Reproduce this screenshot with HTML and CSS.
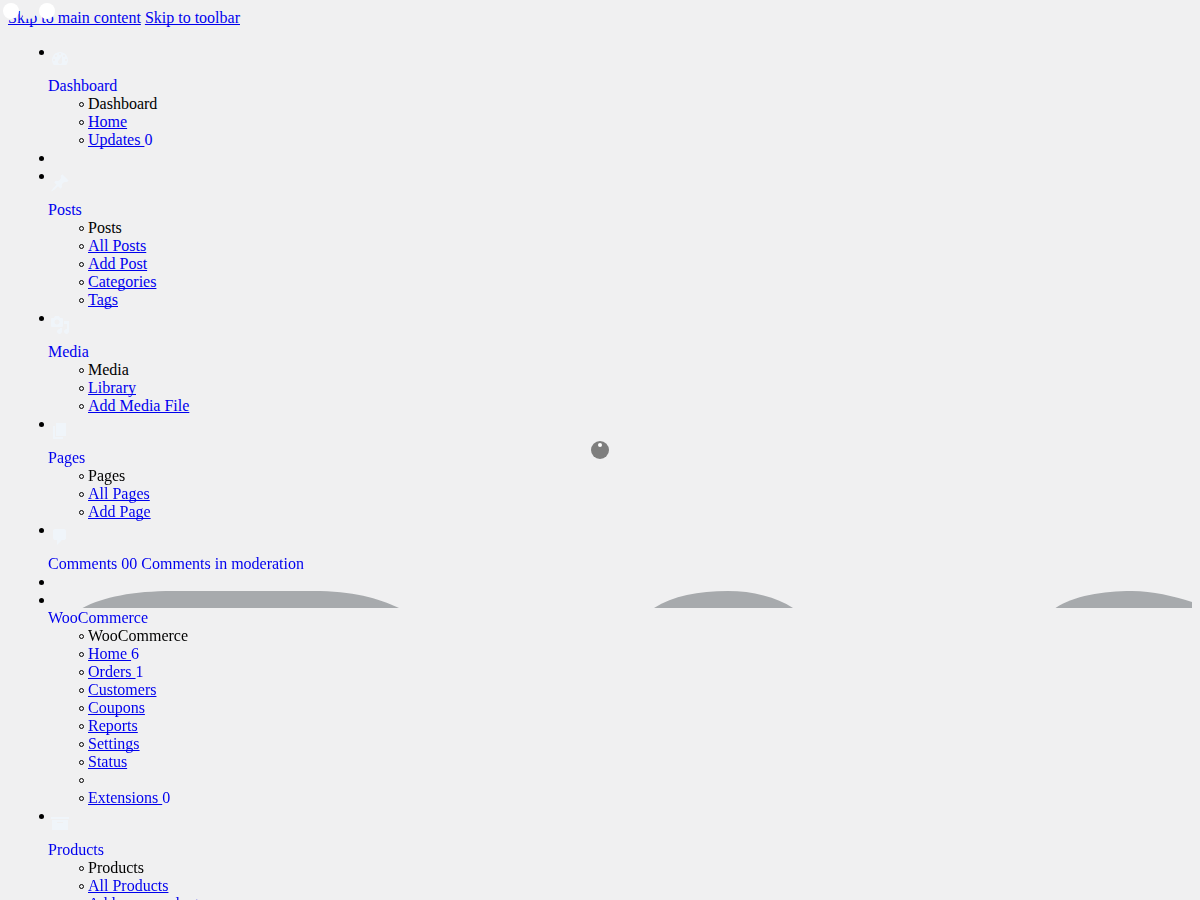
FILE: index.html
```html
<!DOCTYPE html>
<html lang="en">

<head>
    <meta charset="UTF-8">
    <meta name="viewport" content="width=device-width, initial-scale=1.0">
    <title>Dashboard</title>
    <link rel="stylesheet" href="styles.css">
</head>

<body>
    <div class="window-dots">
        <span class="dot dot-white"></span>
        <span class="dot dot-blank"></span>
        <span class="dot dot-white"></span>
    </div>
    <div class="spinner"><span class="spinner-dot"></span></div>

    <a href="#">Skip to main content</a>
    <a href="#">Skip to toolbar</a>

    <ul class="admin-menu">
        <li>
            <a class="menu-link" href="#">
                <div class="menu-image">
                    <svg class="menu-icon" viewBox="0 0 20 20"><path d="M3.76 16h12.48c1.1-1.37 1.76-3.11 1.76-5 0-4.42-3.58-8-8-8s-8 3.58-8 8c0 1.89.66 3.63 1.76 5zM10 4c.55 0 1 .45 1 1s-.45 1-1 1-1-.45-1-1 .45-1 1-1zM6 6c.55 0 1 .45 1 1s-.45 1-1 1-1-.45-1-1 .45-1 1-1zm8 0c.55 0 1 .45 1 1s-.45 1-1 1-1-.45-1-1 .45-1 1-1zm-5.37 5.55L12 7v6c0 1.1-.9 2-2 2s-2-.9-2-2c0-.57.24-1.08.63-1.45zM4 10c.55 0 1 .45 1 1s-.45 1-1 1-1-.45-1-1 .45-1 1-1zm12 0c.55 0 1 .45 1 1s-.45 1-1 1-1-.45-1-1 .45-1 1-1z" fill-rule="evenodd"/></svg>
                </div>
                <div>Dashboard</div>
            </a>
            <ul>
                <li>Dashboard</li>
                <li><a href="#">Home</a></li>
                <li><a href="#">Updates <span class="count">0</span></a></li>
            </ul>
        </li>
        <li></li>
        <li>
            <a class="menu-link" href="#">
                <div class="menu-image">
                    <svg class="menu-icon" viewBox="0 0 20 20"><path d="M10.44 3.02l1.82-1.82 6.36 6.35-1.83 1.82c-1.05-.68-2.48-.57-3.41.36l-.75.75c-.92.93-1.04 2.35-.35 3.41l-1.83 1.82-2.41-2.41-2.8 2.79c-.42.42-3.38 2.71-3.8 2.29s1.86-3.39 2.28-3.81l2.79-2.79L4.1 9.36l1.83-1.82c1.05.69 2.48.57 3.4-.36l.75-.75c.93-.92 1.05-2.35.36-3.41z"/></svg>
                </div>
                <div>Posts</div>
            </a>
            <ul>
                <li>Posts</li>
                <li><a href="#">All Posts</a></li>
                <li><a href="#">Add Post</a></li>
                <li><a href="#">Categories</a></li>
                <li><a href="#">Tags</a></li>
            </ul>
        </li>
        <li>
            <a class="menu-link" href="#">
                <div class="menu-image">
                    <svg class="menu-icon" viewBox="0 0 20 20"><path d="M13 11V4c0-.55-.45-1-1-1h-1.670L9 1H5L3.670 3H2c-.55 0-1 .45-1 1v7c0 .55.45 1 1 1h10c.55 0 1-.45 1-1zM7 4.500c1.380 0 2.500 1.120 2.500 2.500S8.380 9.500 7 9.500 4.500 8.380 4.500 7 5.620 4.500 7 4.500zM14 6h5v10.500c0 1.380-1.120 2.500-2.500 2.500S14 17.880 14 16.500s1.120-2.500 2.500-2.500c.17 0 .34.02.5.05V9h-3V6zm-4 8.050V13h2v3.500c0 1.380-1.120 2.500-2.500 2.500S7 17.880 7 16.500 8.120 14 9.500 14c.17 0 .34.02.5.05z"/></svg>
                </div>
                <div>Media</div>
            </a>
            <ul>
                <li>Media</li>
                <li><a href="#">Library</a></li>
                <li><a href="#">Add Media File</a></li>
            </ul>
        </li>
        <li>
            <a class="menu-link" href="#">
                <div class="menu-image">
                    <svg class="menu-icon" viewBox="0 0 20 20"><path d="M6 15V2h10v13H6zm-1 1h8v2H3V5h2v11z"/></svg>
                </div>
                <div>Pages</div>
            </a>
            <ul>
                <li>Pages</li>
                <li><a href="#">All Pages</a></li>
                <li><a href="#">Add Page</a></li>
            </ul>
        </li>
        <li>
            <a class="menu-link" href="#">
                <div class="menu-image">
                    <svg class="menu-icon" viewBox="0 0 20 20"><path d="M5 2h9c1.1 0 2 .9 2 2v7c0 1.1-.9 2-2 2h-2l-5 5v-5H5c-1.1 0-2-.9-2-2V4c0-1.1.9-2 2-2z"/></svg>
                </div>
                <div>Comments <span class="count">0</span><span class="count">0 Comments in moderation</span></div>
            </a>
        </li>
        <li></li>
        <li>
            <a class="menu-link" href="#">
                <div class="woo-image">
                    <svg class="woo-logo" viewBox="0 0 1144 18">
                        <path d="M34.5 17C55 6 85 0 125 0H265C305 0 330 7 351 17Z"/>
                        <path d="M606 17C625 5 650 0 680 0C705 0 728 6 745 17Z"/>
                        <path d="M1007.5 17C1025 5 1055 0 1084 0C1105 0 1125 5 1144 11V17Z"/>
                    </svg>
                </div>
                <div>WooCommerce</div>
            </a>
            <ul>
                <li>WooCommerce</li>
                <li><a href="#">Home <span class="count">6</span></a></li>
                <li><a href="#">Orders <span class="count">1</span></a></li>
                <li><a href="#">Customers</a></li>
                <li><a href="#">Coupons</a></li>
                <li><a href="#">Reports</a></li>
                <li><a href="#">Settings</a></li>
                <li><a href="#">Status</a></li>
                <li></li>
                <li><a href="#">Extensions <span class="count">0</span></a></li>
            </ul>
        </li>
        <li>
            <a class="menu-link" href="#">
                <div class="menu-image">
                    <svg class="menu-icon" viewBox="0 0 20 20"><path d="M19 4v2H1V4h18zM2 7h16v10H2V7zm11 3V9H7v1h6z"/></svg>
                </div>
                <div>Products</div>
            </a>
            <ul>
                <li>Products</li>
                <li><a href="#">All Products</a></li>
                <li><a href="#">Add new product</a></li>
            </ul>
        </li>
    </ul>
</body>
</html>
```

FILE: styles.css
```css
html {
    overflow: hidden;
    height: 900px;
}

body {
    padding-top: 1px;
    background-color: #f0f0f1;
    font-family: "Liberation Serif", serif;
    font-size: 16px;
}

a {
    text-decoration-skip-ink: none;
}

.admin-menu,
.admin-menu ul {
    list-style: none;
}

.admin-menu li {
    position: relative;
    min-height: 18px;
}

/* small bullets, the default markers are too big and sit too far left */
.admin-menu li::before {
    content: "";
    position: absolute;
    top: 7px;
    left: -9px;
    width: 5px;
    height: 5px;
    border-radius: 50%;
    background-color: #000;
}

.admin-menu ul li::before {
    box-sizing: border-box;
    border: 1px solid #000;
    background-color: transparent;
}

.menu-link {
    text-decoration: none;
}

.menu-image {
    height: 34px;
}

.menu-icon {
    position: absolute;
    width: 20px;
    height: 20px;
    margin: 6px 0 0 2px;
    fill: #f0f6fc;
    opacity: .85;
}

.woo-image {
    height: 18px;
}

.woo-logo {
    position: absolute;
    width: 1144px;
    height: 18px;
    fill: #a7aaad;
}

.count {
    display: inline-block;
}

/* dots at the top left, over the skip links */
.window-dots {
    position: absolute;
    top: 3px;
    left: 3px;
    display: flex;
    gap: 2px;
}

.dot {
    width: 16px;
    height: 16px;
    border-radius: 50%;
}

.dot-white {
    background-color: #fff;
}

.dot-blank {
    background-color: #f0f0f1;
}

.spinner {
    position: fixed;
    top: 441px;
    left: 591px;
    width: 18px;
    height: 18px;
    border-radius: 50%;
    background-color: #7e7e7e;
}

.spinner-dot {
    position: absolute;
    top: 2px;
    left: 7px;
    width: 4px;
    height: 4px;
    border-radius: 50%;
    background-color: #fff;
}
```
